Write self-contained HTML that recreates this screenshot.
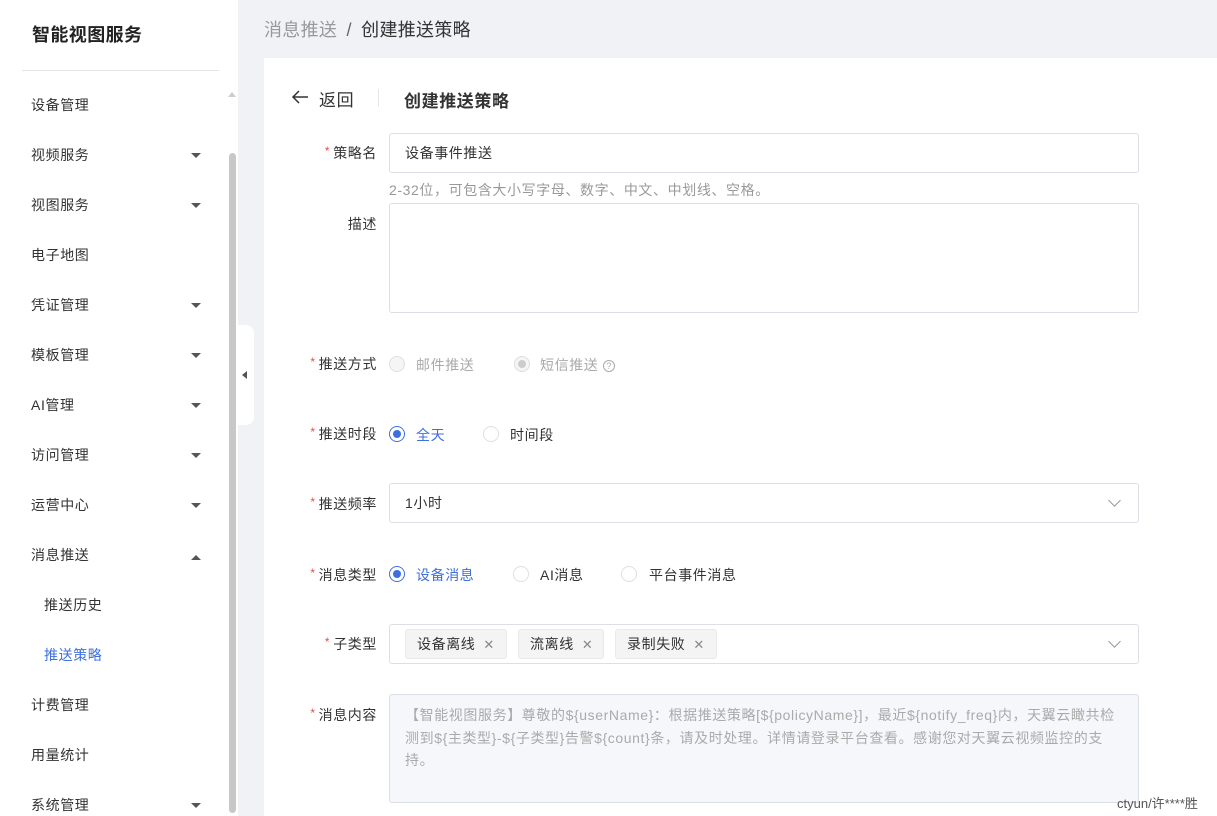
<!DOCTYPE html>
<html><head><meta charset="utf-8"><style>
*{box-sizing:border-box;margin:0;padding:0}
html,body{width:1217px;height:816px;overflow:hidden}
body{background:#f0f2f5;font-family:"Liberation Sans","Noto Sans CJK SC",sans-serif;font-size:14px;color:#333;position:relative;letter-spacing:0.6px}
.side{position:absolute;left:0;top:0;width:238px;height:816px;background:#fff}
.logo{position:absolute;left:32px;top:21px;font-size:18px;font-weight:bold;color:#222;letter-spacing:0.4px}
.hr{position:absolute;left:22px;top:70px;width:197px;height:1px;background:#e5e5e5}
.mi{position:absolute;left:31px;font-size:14px;color:#333}
.car{position:absolute;left:191px;width:0;height:0;border-left:5px solid transparent;border-right:5px solid transparent;border-top:5px solid #555}
.caru{border-top:none;border-bottom:5px solid #555}
.sb{position:absolute;left:229px;top:153px;width:7px;height:660px;background:#c8c8c8;border-radius:4px}
.tab{position:absolute;left:238px;top:325px;width:16px;height:100px;background:#fff;border-radius:0 8px 8px 0}
.crumb{position:absolute;left:264px;top:16px;font-size:18px;color:#999;letter-spacing:0.3px}
.crumb b{font-weight:normal;color:#333}
.card{position:absolute;left:264px;top:58px;width:960px;height:758px;background:#fff}
.lab{position:absolute;width:113px;text-align:right;left:264px;font-size:14px;color:#333}
.lab i{color:#e34d4d;font-style:normal;font-size:12px;margin-right:3px;position:relative;top:-3px}
.inp{position:absolute;left:389px;width:750px;border:1px solid #dcdfe6;border-radius:3px;background:#fff;font-size:14px;color:#333}
.rad{position:absolute;width:16px;height:16px;border-radius:50%;border:1px solid #dcdfe6;background:#fff}
.rad.on{border-color:#3d6fe0}
.rad.on:after{content:"";position:absolute;left:3px;top:3px;width:8px;height:8px;border-radius:50%;background:#3d6fe0}
.rad.dis{background:#f5f5f5}
.rad.dis.on{border-color:#ddd}.rad.dis.on:after{background:#ccc}
.t{position:absolute;font-size:14px}
.tag{position:absolute;top:629px;height:30px;background:#f4f4f5;border:1px solid #e9e9eb;border-radius:3px;font-size:14px;line-height:28px;padding-left:11px;color:#333}
.tag span{color:#888;margin-left:8px;font-size:13px}
.chev{position:absolute;left:1110px;width:9px;height:9px;border-right:1.3px solid #999;border-bottom:1.3px solid #999;transform:rotate(45deg)}
</style></head><body>
<div class="side">
<div class="logo">智能视图服务</div><div class="hr"></div>
<div class="mi" style="top:95px">设备管理</div>
<div class="mi" style="top:145px">视频服务</div><div class="car" style="top:153px"></div>
<div class="mi" style="top:195px">视图服务</div><div class="car" style="top:203px"></div>
<div class="mi" style="top:245px">电子地图</div>
<div class="mi" style="top:295px">凭证管理</div><div class="car" style="top:303px"></div>
<div class="mi" style="top:345px">模板管理</div><div class="car" style="top:353px"></div>
<div class="mi" style="top:395px">AI管理</div><div class="car" style="top:403px"></div>
<div class="mi" style="top:445px">访问管理</div><div class="car" style="top:453px"></div>
<div class="mi" style="top:495px">运营中心</div><div class="car" style="top:503px"></div>
<div class="mi" style="top:545px">消息推送</div><div class="car caru" style="top:555px"></div>
<div class="mi" style="top:595px;left:44px">推送历史</div>
<div class="mi" style="top:645px;left:44px;color:#3d6fe0">推送策略</div>
<div class="mi" style="top:695px">计费管理</div>
<div class="mi" style="top:745px">用量统计</div>
<div class="mi" style="top:795px">系统管理</div><div class="car" style="top:803px"></div>
<div style="position:absolute;left:228px;top:92px;border-left:4px solid transparent;border-right:4px solid transparent;border-bottom:5px solid #ccc"></div>
<div class="sb"></div>
</div>
<div class="tab"><div style="position:absolute;left:4px;top:46px;border-top:4px solid transparent;border-bottom:4px solid transparent;border-right:5px solid #555"></div></div>
<div class="crumb">消息推送 <span style="color:#666;margin:0 4px">/</span> <b>创建推送策略</b></div>
<div class="card"></div>
<svg style="position:absolute;left:291px;top:89px" width="18" height="16" viewBox="0 0 18 16"><path d="M17 8H2M8 2L2 8l6 6" fill="none" stroke="#333" stroke-width="1.5"/></svg>
<div class="t" style="left:319px;top:86px;font-size:17px;color:#333">返回</div>
<div style="position:absolute;left:378px;top:89px;width:1px;height:18px;background:#e5e5e5"></div>
<div class="t" style="left:404px;top:87px;font-size:17px;font-weight:bold;color:#333">创建推送策略</div>

<div class="lab" style="top:143px"><i>*</i>策略名</div>
<div class="inp" style="top:133px;height:40px;line-height:38px;padding-left:15px">设备事件推送</div>
<div class="t" style="left:389px;top:180px;color:#999">2-32位，可包含大小写字母、数字、中文、中划线、空格。</div>
<div class="lab" style="top:214px">描述</div>
<div class="inp" style="top:203px;height:110px"></div>

<div class="lab" style="top:354px"><i>*</i>推送方式</div>
<div class="rad dis" style="left:389px;top:356px"></div><div class="t" style="left:416px;top:355px;color:#aaa">邮件推送</div>
<div class="rad dis on" style="left:514px;top:356px"></div><div class="t" style="left:540px;top:355px;color:#aaa">短信推送 <span style="display:inline-block;width:12px;height:12px;border:1px solid #aaa;border-radius:50%;font-size:9px;line-height:10px;text-align:center;vertical-align:1px;letter-spacing:0">?</span></div>

<div class="lab" style="top:424px"><i>*</i>推送时段</div>
<div class="rad on" style="left:389px;top:426px"></div><div class="t" style="left:416px;top:425px;color:#3d6fe0">全天</div>
<div class="rad" style="left:483px;top:426px"></div><div class="t" style="left:510px;top:425px">时间段</div>

<div class="lab" style="top:494px"><i>*</i>推送频率</div>
<div class="inp" style="top:483px;height:40px;line-height:38px;padding-left:15px">1小时</div>
<div class="chev" style="top:496px"></div>

<div class="lab" style="top:565px"><i>*</i>消息类型</div>
<div class="rad on" style="left:389px;top:566px"></div><div class="t" style="left:416px;top:565px;color:#3d6fe0">设备消息</div>
<div class="rad" style="left:513px;top:566px"></div><div class="t" style="left:540px;top:565px">AI消息</div>
<div class="rad" style="left:621px;top:566px"></div><div class="t" style="left:649px;top:565px">平台事件消息</div>

<div class="lab" style="top:634px"><i>*</i>子类型</div>
<div class="inp" style="top:624px;height:40px"></div>
<div class="tag" style="left:405px;width:102px">设备离线<span>✕</span></div>
<div class="tag" style="left:518px;width:86px">流离线<span>✕</span></div>
<div class="tag" style="left:615px;width:102px">录制失败<span>✕</span></div>
<div class="chev" style="top:637px"></div>

<div class="lab" style="top:705px"><i>*</i>消息内容</div>
<div class="inp" style="top:694px;height:109px;background:#f5f7fa;color:#aaa;padding:9px 22px 9px 15px;line-height:22.5px">【智能视图服务】尊敬的${userName}：根据推送策略[${policyName}]，最近${notify_freq}内，天翼云瞰共检测到${主类型}-${子类型}告警${count}条，请及时处理。详情请登录平台查看。感谢您对天翼云视频监控的支持。</div>
<div class="t" style="left:1117px;top:793px;font-size:13px;color:#555;letter-spacing:0">ctyun/许****胜</div>
</body></html>
